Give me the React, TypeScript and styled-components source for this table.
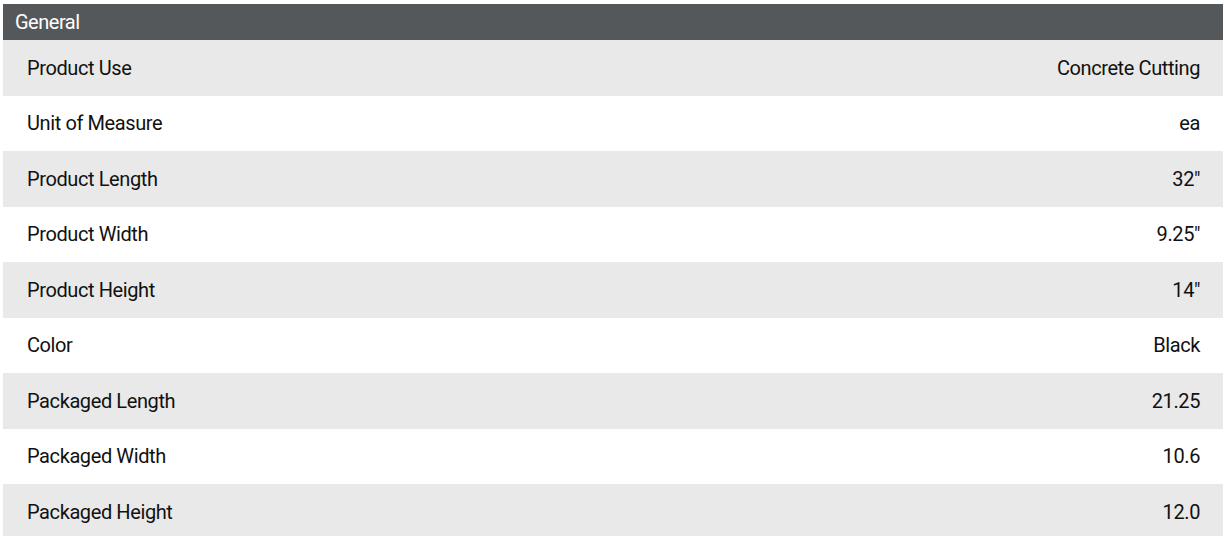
import styled, { createGlobalStyle } from 'styled-components';

interface Spec {
  label: string;
  value: string;
}

const specs: Spec[] = [
  { label: 'Product Use', value: 'Concrete Cutting' },
  { label: 'Unit of Measure', value: 'ea' },
  { label: 'Product Length', value: '32"' },
  { label: 'Product Width', value: '9.25"' },
  { label: 'Product Height', value: '14"' },
  { label: 'Color', value: 'Black' },
  { label: 'Packaged Length', value: '21.25' },
  { label: 'Packaged Width', value: '10.6' },
  { label: 'Packaged Height', value: '12.0' },
];

const GlobalStyle = createGlobalStyle`
  body {
    margin: 0;
    background: #ffffff;
    font-family: Roboto, "Liberation Sans", sans-serif;
  }
`;

export default function App() {
  return (
    <>
      <GlobalStyle />
      <Page>
        <SpecTable>
          <Heading>General</Heading>
          {specs.map((s, i) => (
            <Row key={s.label} $shaded={i % 2 === 0}>
              <Label>{s.label}</Label>
              <Value>{s.value}</Value>
            </Row>
          ))}
        </SpecTable>
      </Page>
    </>
  );
}

const Page = styled.div`
  padding: 4px 2px 0 3px;
`;

const SpecTable = styled.section`
  display: flex;
  flex-direction: column;
  width: 1220px;
`;

const Heading = styled.h3`
  margin: 0;
  height: 36px;
  display: flex;
  align-items: center;
  padding: 0 12px;
  background: #55585b;
  color: #ffffff;
  font-size: 20px;
  font-weight: 400;
  letter-spacing: -0.5px;
`;

const Row = styled.div<{ $shaded: boolean }>`
  height: 55.5px;
  display: flex;
  align-items: center;
  justify-content: space-between;
  padding: 0 23px 0 24px;
  background: ${(p) => (p.$shaded ? '#e9e9e9' : '#ffffff')};
  color: #111111;
  font-size: 20px;
  letter-spacing: -0.4px;
`;

const Label = styled.span``;

const Value = styled.span`
  text-align: right;
`;
